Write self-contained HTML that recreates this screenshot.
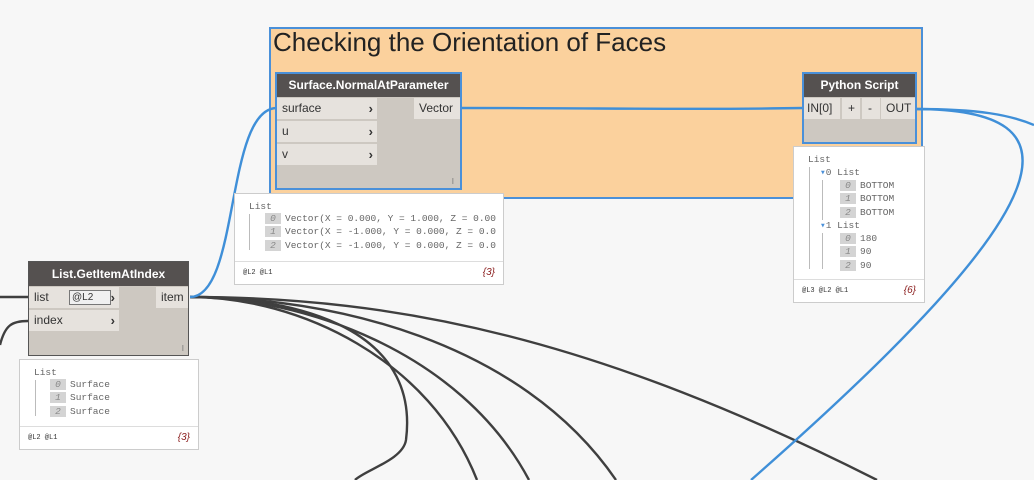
<!DOCTYPE html>
<html><head><meta charset="utf-8"><style>
body{margin:0;width:1034px;height:480px;overflow:hidden;background:#f7f7f7;font-family:"Liberation Sans",sans-serif;position:relative}
.abs{position:absolute}
.group{left:269px;top:27px;width:650px;height:168px;background:#fbd19d;border:2px solid #4a90d9}
.gtitle{left:273px;top:27px;font-size:26px;color:#222}
.node{position:absolute;background:#cdc8c1;border:1px solid #555}
.node.sel{border:2px solid #4a90d9}
.hdr{background:#555150;color:#fff;font-weight:bold;font-size:12px;text-align:center;height:23px;line-height:23px}
.port{position:absolute;background:#e6e2dd;font-size:12px;color:#333;height:21px;line-height:21px;padding-left:5px;box-sizing:border-box}
.arr{position:absolute;right:4px;top:0;font-weight:bold;color:#333;font-size:13px}
.prev{position:absolute;background:#fff;border:1px solid #ccc;font-family:"Liberation Mono",monospace;font-size:9.5px;color:#666}
.idx{display:inline-block;background:#d4d4d4;width:16px;text-align:center;color:#888;font-style:italic;margin-right:4px}
.foot{position:absolute;left:0;right:0;bottom:0;height:22px;border-top:1px solid #ddd;font-size:7px;color:#333;line-height:22px;padding-left:8px}
.cnt{position:absolute;right:8px;font-style:italic;font-size:10px;color:#8a1c1c;font-family:"Liberation Sans",sans-serif}
.vl{position:absolute;width:1px;background:#bbb}
</style></head><body>
<div class="abs group"></div>
<div class="abs gtitle">Checking the Orientation of Faces</div>

<svg class="abs" style="left:0;top:0" width="1034" height="480">
<g fill="none" stroke="#3f3f3f" stroke-width="2.4">
<path d="M190,297 C300,297 420,330 406,440 C403,460 365,470 355,480"/>
<path d="M190,297 C300,297 430,360 477,480"/>
<path d="M190,297 C300,297 460,350 529,480"/>
<path d="M190,297 C330,297 520,340 616,480"/>
<path d="M190,297 C400,297 600,340 877,480"/>
<path d="M0,297 L28,297"/>
<path d="M0,345 C5,325 12,321 28,321"/>
</g>
<g fill="none" stroke="#3f8fd8" stroke-width="2.4">
<path d="M190,297 C240,297 225,108 277,108"/>
<path d="M460,108 C600,108 700,110 803,108"/>
<path d="M915,109 C980,109 1010,115 1034,125"/>
<path d="M915,109 C1085,109 1070,200 751,480"/>
</g>
</svg>

<!-- Surface.NormalAtParameter -->
<div class="node sel" style="left:275px;top:72px;width:183px;height:114px">
<div class="hdr">Surface.NormalAtParameter</div>
<div class="port" style="left:0;top:24px;width:100px">surface<span class="arr">›</span></div>
<div class="port" style="left:0;top:47px;width:100px">u<span class="arr">›</span></div>
<div class="port" style="left:0;top:70px;width:100px">v<span class="arr">›</span></div>
<div class="port" style="right:0;top:24px;width:46px">Vector</div>
<div class="abs" style="right:6px;bottom:2px;font-size:8px;color:#777">I</div>
</div>
<div class="prev" style="left:234px;top:193px;width:268px;height:90px;overflow:hidden">
<div style="position:absolute;left:14px;top:7px">List</div>
<div class="vl" style="left:14px;top:20px;height:36px"></div>
<div style="position:absolute;left:30px;top:19px;white-space:nowrap"><span class="idx">0</span>Vector(X = 0.000, Y = 1.000, Z = 0.00</div>
<div style="position:absolute;left:30px;top:32px;white-space:nowrap"><span class="idx">1</span>Vector(X = -1.000, Y = 0.000, Z = 0.0</div>
<div style="position:absolute;left:30px;top:46px;white-space:nowrap"><span class="idx">2</span>Vector(X = -1.000, Y = 0.000, Z = 0.0</div>
<div class="foot">@L2 @L1<span class="cnt">{3}</span></div>
</div>

<!-- Python Script -->
<div class="node sel" style="left:802px;top:72px;width:111px;height:68px">
<div class="hdr">Python Script</div>
<div class="port" style="left:0;top:24px;width:36px;padding-left:3px">IN[0]</div>
<div class="port" style="left:38px;top:24px;width:18px;padding-left:6px">+</div>
<div class="port" style="left:58px;top:24px;width:18px;padding-left:6px">-</div>
<div class="port" style="right:0;top:24px;width:34px">OUT</div>
</div>
<div class="prev" style="left:793px;top:146px;width:130px;height:155px">
<div style="position:absolute;left:14px;top:7px">List</div>
<div class="vl" style="left:15px;top:20px;height:102px"></div>
<div style="position:absolute;left:26px;top:20px;color:#666"><span style="color:#4a90d9">▾</span>0 List</div>
<div class="vl" style="left:28px;top:33px;height:40px"></div>
<div class="vl" style="left:28px;top:86px;height:36px"></div>
<div style="position:absolute;left:46px;top:33px"><span class="idx">0</span>BOTTOM</div>
<div style="position:absolute;left:46px;top:46px"><span class="idx">1</span>BOTTOM</div>
<div style="position:absolute;left:46px;top:60px"><span class="idx">2</span>BOTTOM</div>
<div style="position:absolute;left:26px;top:73px"><span style="color:#4a90d9">▾</span>1 List</div>
<div style="position:absolute;left:46px;top:86px"><span class="idx">0</span>180</div>
<div style="position:absolute;left:46px;top:99px"><span class="idx">1</span>90</div>
<div style="position:absolute;left:46px;top:113px"><span class="idx">2</span>90</div>
<div class="foot">@L3 @L2 @L1<span class="cnt">{6}</span></div>
</div>

<!-- List.GetItemAtIndex -->
<div class="node" style="left:28px;top:261px;width:159px;height:93px">
<div class="hdr" style="height:24px;line-height:24px">List.GetItemAtIndex</div>
<div class="port" style="left:0;top:25px;width:90px">list
<span class="abs" style="left:40px;top:3px;width:38px;height:13px;border:1px solid #777;background:#f0f0f0;font-size:10px;line-height:13px;padding-left:2px">@L2</span>
<span class="arr">›</span></div>
<div class="port" style="left:0;top:48px;width:90px">index<span class="arr">›</span></div>
<div class="port" style="right:0;top:25px;width:32px">item</div>
<div class="abs" style="right:4px;bottom:2px;font-size:8px;color:#777">I</div>
</div>
<div class="prev" style="left:19px;top:359px;width:178px;height:89px">
<div style="position:absolute;left:14px;top:7px">List</div>
<div class="vl" style="left:15px;top:20px;height:36px"></div>
<div style="position:absolute;left:30px;top:19px"><span class="idx">0</span>Surface</div>
<div style="position:absolute;left:30px;top:32px"><span class="idx">1</span>Surface</div>
<div style="position:absolute;left:30px;top:46px"><span class="idx">2</span>Surface</div>
<div class="foot">@L2 @L1<span class="cnt">{3}</span></div>
</div>
</body></html>
